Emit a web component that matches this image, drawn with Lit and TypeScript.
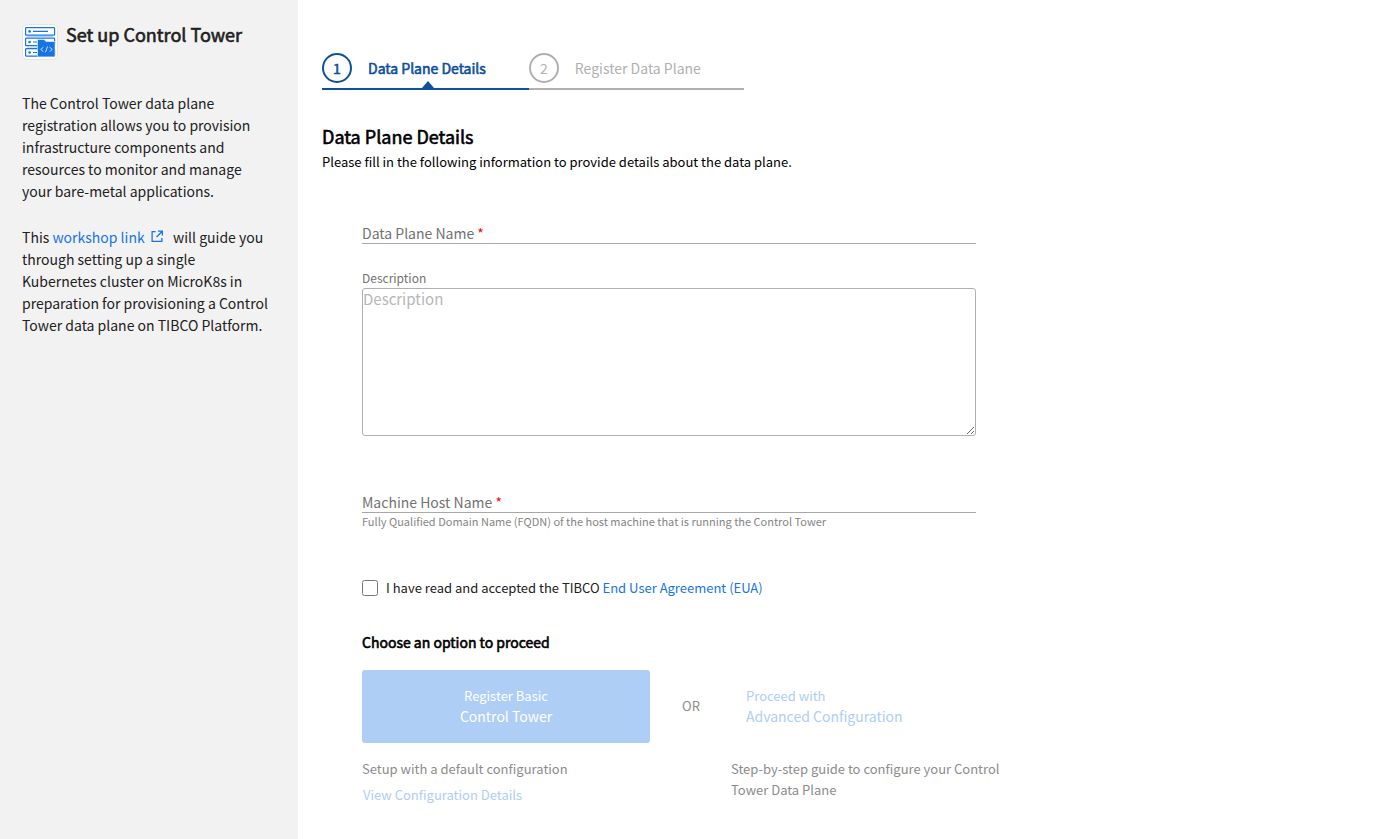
import { LitElement, html, css } from "lit";
import { customElement } from "lit/decorators.js";

@customElement("app-root")
export class AppRoot extends LitElement {
  static styles = css`
    :host {
      display: flex;
      min-height: 100vh;
      background: #fff;
      color: #212121;
      font-family: "Noto Sans CJK SC", "Noto Sans", sans-serif;
      font-size: 14px;
      line-height: 22px;
    }
    * {
      box-sizing: border-box;
    }
    h1, h2, h3, p, ol {
      margin: 0;
      padding: 0;
      font-weight: 400;
    }
    a {
      color: #1774e5;
      text-decoration: none;
    }
    .strong {
      -webkit-text-stroke: 0.6px currentColor;
    }
    aside {
      flex: 0 0 298px;
      padding: 24px 28px 24px 22px;
      background: #f2f2f2;
    }
    .brand {
      display: flex;
      gap: 8px;
      margin-bottom: 32px;
    }
    .brand svg {
      flex: none;
    }
    h1 {
      font-size: 18px;
      line-height: 20px;
    }
    aside p {
      margin-bottom: 24px;
    }
    .external {
      margin: 0 7px 0 3px;
    }
    main {
      flex: 1;
      min-width: 0;
      padding: 53px 24px 32px;
      color: #000;
    }
    .steps {
      display: flex;
      list-style: none;
      margin-bottom: 36px;
    }
    .step {
      display: flex;
      align-items: center;
      gap: 16px;
      height: 37px;
      padding: 0 43px 5px 0;
      border-bottom: 2px solid #b0b0b0;
      color: #b0b0b0;
    }
    .step.active {
      color: #0e4f9e;
      border-color: #0e4f9e;
    }
    .num {
      display: grid;
      place-items: center;
      width: 30px;
      height: 30px;
      border: 2px solid currentColor;
      border-radius: 50%;
    }
    .name {
      position: relative;
    }
    .step.active .name::after {
      content: "";
      position: absolute;
      left: 50%;
      bottom: -9px;
      margin-left: -5px;
      border: 6px solid transparent;
      border-top: 0;
      border-bottom: 7px solid currentColor;
    }
    h2 {
      font-size: 18px;
      line-height: 20px;
    }
    .intro {
      margin-top: 4px;
      font-size: 13px;
      line-height: 24px;
    }
    form {
      max-width: 654px;
      padding-left: 40px;
      margin-top: 48px;
    }
    .field {
      position: relative;
    }
    .field input {
      display: block;
      width: 100%;
      height: 22px;
      padding: 0;
      border: 0;
      border-bottom: 1px solid #a8a8a8;
      outline: 0;
      background: transparent;
      font: inherit;
    }
    .field label {
      position: absolute;
      left: 0;
      top: 0;
      color: #727272;
      line-height: 22px;
    }
    .req {
      color: #f00;
    }
    .caption {
      display: block;
      margin-top: 24px;
      font-size: 12px;
      line-height: 20px;
      color: #727272;
    }
    textarea {
      display: block;
      width: 100%;
      height: 148px;
      margin-bottom: 55px;
      padding: 0;
      border: 1px solid #b0b0b0;
      border-radius: 3px;
      outline: 0;
      font: inherit;
      font-size: 15px;
      line-height: 20px;
    }
    textarea::placeholder {
      color: #b6b6b6;
    }
    .hint {
      font-size: 11px;
      line-height: 16px;
      color: #858585;
    }
    .agree {
      display: flex;
      align-items: center;
      gap: 8px;
      margin: 48px 0 31px;
      font-size: 13px;
      color: #212121;
    }
    .agree input {
      width: 16px;
      height: 16px;
      margin: 0;
    }
    h3 {
      font-size: 14px;
      line-height: 24px;
    }
    .options {
      display: grid;
      grid-template-columns: 288px 81px 1fr;
      align-items: center;
      margin: 16px -32px 0 0;
      font-size: 13px;
      line-height: 20px;
      color: #8c8c8c;
    }
    button {
      border: 0;
      padding: 0;
      background: none;
      font: inherit;
      color: #aecef5;
      text-align: left;
    }
    .big {
      display: block;
      font-size: 14px;
    }
    .primary {
      height: 73px;
      padding-bottom: 2px;
      border-radius: 3px;
      background: #aecef5;
      color: #fff;
      text-align: center;
    }
    .advanced {
      padding: 0 0 2px 15px;
    }
    .or {
      padding: 0 0 2px 32px;
    }
    .notes {
      align-items: start;
      margin-top: 15px;
      line-height: 21px;
    }
    .guide {
      grid-column: 3;
    }
    .view {
      display: block;
      margin-top: 5px;
      padding-left: 1px;
    }
  `;

  render() {
    return html`
      <aside>
        <div class="brand">
          <svg width="36" height="36" viewBox="0 0 36 36" aria-hidden="true">
            <rect x="0.5" y="0.5" width="35" height="35" rx="5" fill="#fff" stroke="#e4e4e4" />
            <g fill="#fff" stroke="#1774e5" stroke-width="1.2">
              <rect x="3.6" y="3.6" width="29" height="7.6" rx="0.8" />
              <rect x="3.6" y="14.1" width="29" height="7.6" rx="0.8" />
              <rect x="3.6" y="24.6" width="29" height="7.6" rx="0.8" />
              <path d="M11 7.4h15M11 18h4M11 28.5h4" />
            </g>
            <path d="M5 12.6h26M5 23.1h11" stroke="#a9cdf7" />
            <g fill="#1774e5">
              <circle cx="7.6" cy="7.4" r="1.3" />
              <circle cx="7.6" cy="18" r="1.3" />
              <circle cx="7.6" cy="28.5" r="1.3" />
            </g>
            <path d="M15.5 32.8V15.5h6.5l2 2h9v15.3z" fill="#1774e5" stroke="#fff" stroke-width="0.5" />
            <path d="M21.4 23.2l-2.7 2.2 2.7 2.2M27.6 23.2l2.7 2.2-2.7 2.2M25.5 22.5l-2 5.8" fill="none" stroke="#d8e8fc" stroke-width="0.9" />
          </svg>
          <h1 class="strong">Set up Control Tower</h1>
        </div>
        <p>
          The Control Tower data plane registration allows you to provision infrastructure components and resources to
          monitor and manage your bare-metal applications.
        </p>
        <p>
          This
          <a href="#">workshop link
            <svg class="external" width="12" height="13" viewBox="0 0 13 14" fill="none" stroke="currentColor" stroke-width="1.4" aria-hidden="true">
              <path d="M5 1.7H1.2v10.6h10.6V8.5M7.5 1.2h4.8V6M12 1.5L6 7.5" />
            </svg></a>
          will guide you through setting up a single Kubernetes cluster on MicroK8s in preparation for provisioning a
          Control Tower data plane on TIBCO Platform.
        </p>
      </aside>
      <main>
        <ol class="steps">
          <li class="step active strong" aria-current="step">
            <span class="num">1</span><span class="name">Data Plane Details</span>
          </li>
          <li class="step"><span class="num">2</span><span class="name">Register Data Plane</span></li>
        </ol>
        <h2 class="strong">Data Plane Details</h2>
        <p class="intro">Please fill in the following information to provide details about the data plane.</p>
        <form>
          <div class="field">
            <input id="dp-name" required />
            <label for="dp-name">Data Plane Name <span class="req">*</span></label>
          </div>
          <label class="caption" for="description">Description</label>
          <textarea id="description" placeholder="Description"></textarea>
          <div class="field">
            <input id="host-name" required aria-describedby="host-hint" />
            <label for="host-name">Machine Host Name <span class="req">*</span></label>
          </div>
          <p class="hint" id="host-hint">
            Fully Qualified Domain Name (FQDN) of the host machine that is running the Control Tower
          </p>
          <div class="agree">
            <input type="checkbox" id="eua" />
            <label for="eua">I have read and accepted the TIBCO <a href="#">End User Agreement (EUA)</a></label>
          </div>
          <h3 class="strong">Choose an option to proceed</h3>
          <div class="options">
            <button class="primary" type="button" disabled>Register Basic<span class="big">Control Tower</span></button>
            <span class="or">OR</span>
            <button class="advanced" type="button" disabled>
              Proceed with<span class="big">Advanced Configuration</span>
            </button>
          </div>
          <div class="options notes">
            <div>
              <p>Setup with a default configuration</p>
              <button class="view" type="button" disabled>View Configuration Details</button>
            </div>
            <p class="guide">Step-by-step guide to configure your Control Tower Data Plane</p>
          </div>
        </form>
      </main>
    `;
  }
}
